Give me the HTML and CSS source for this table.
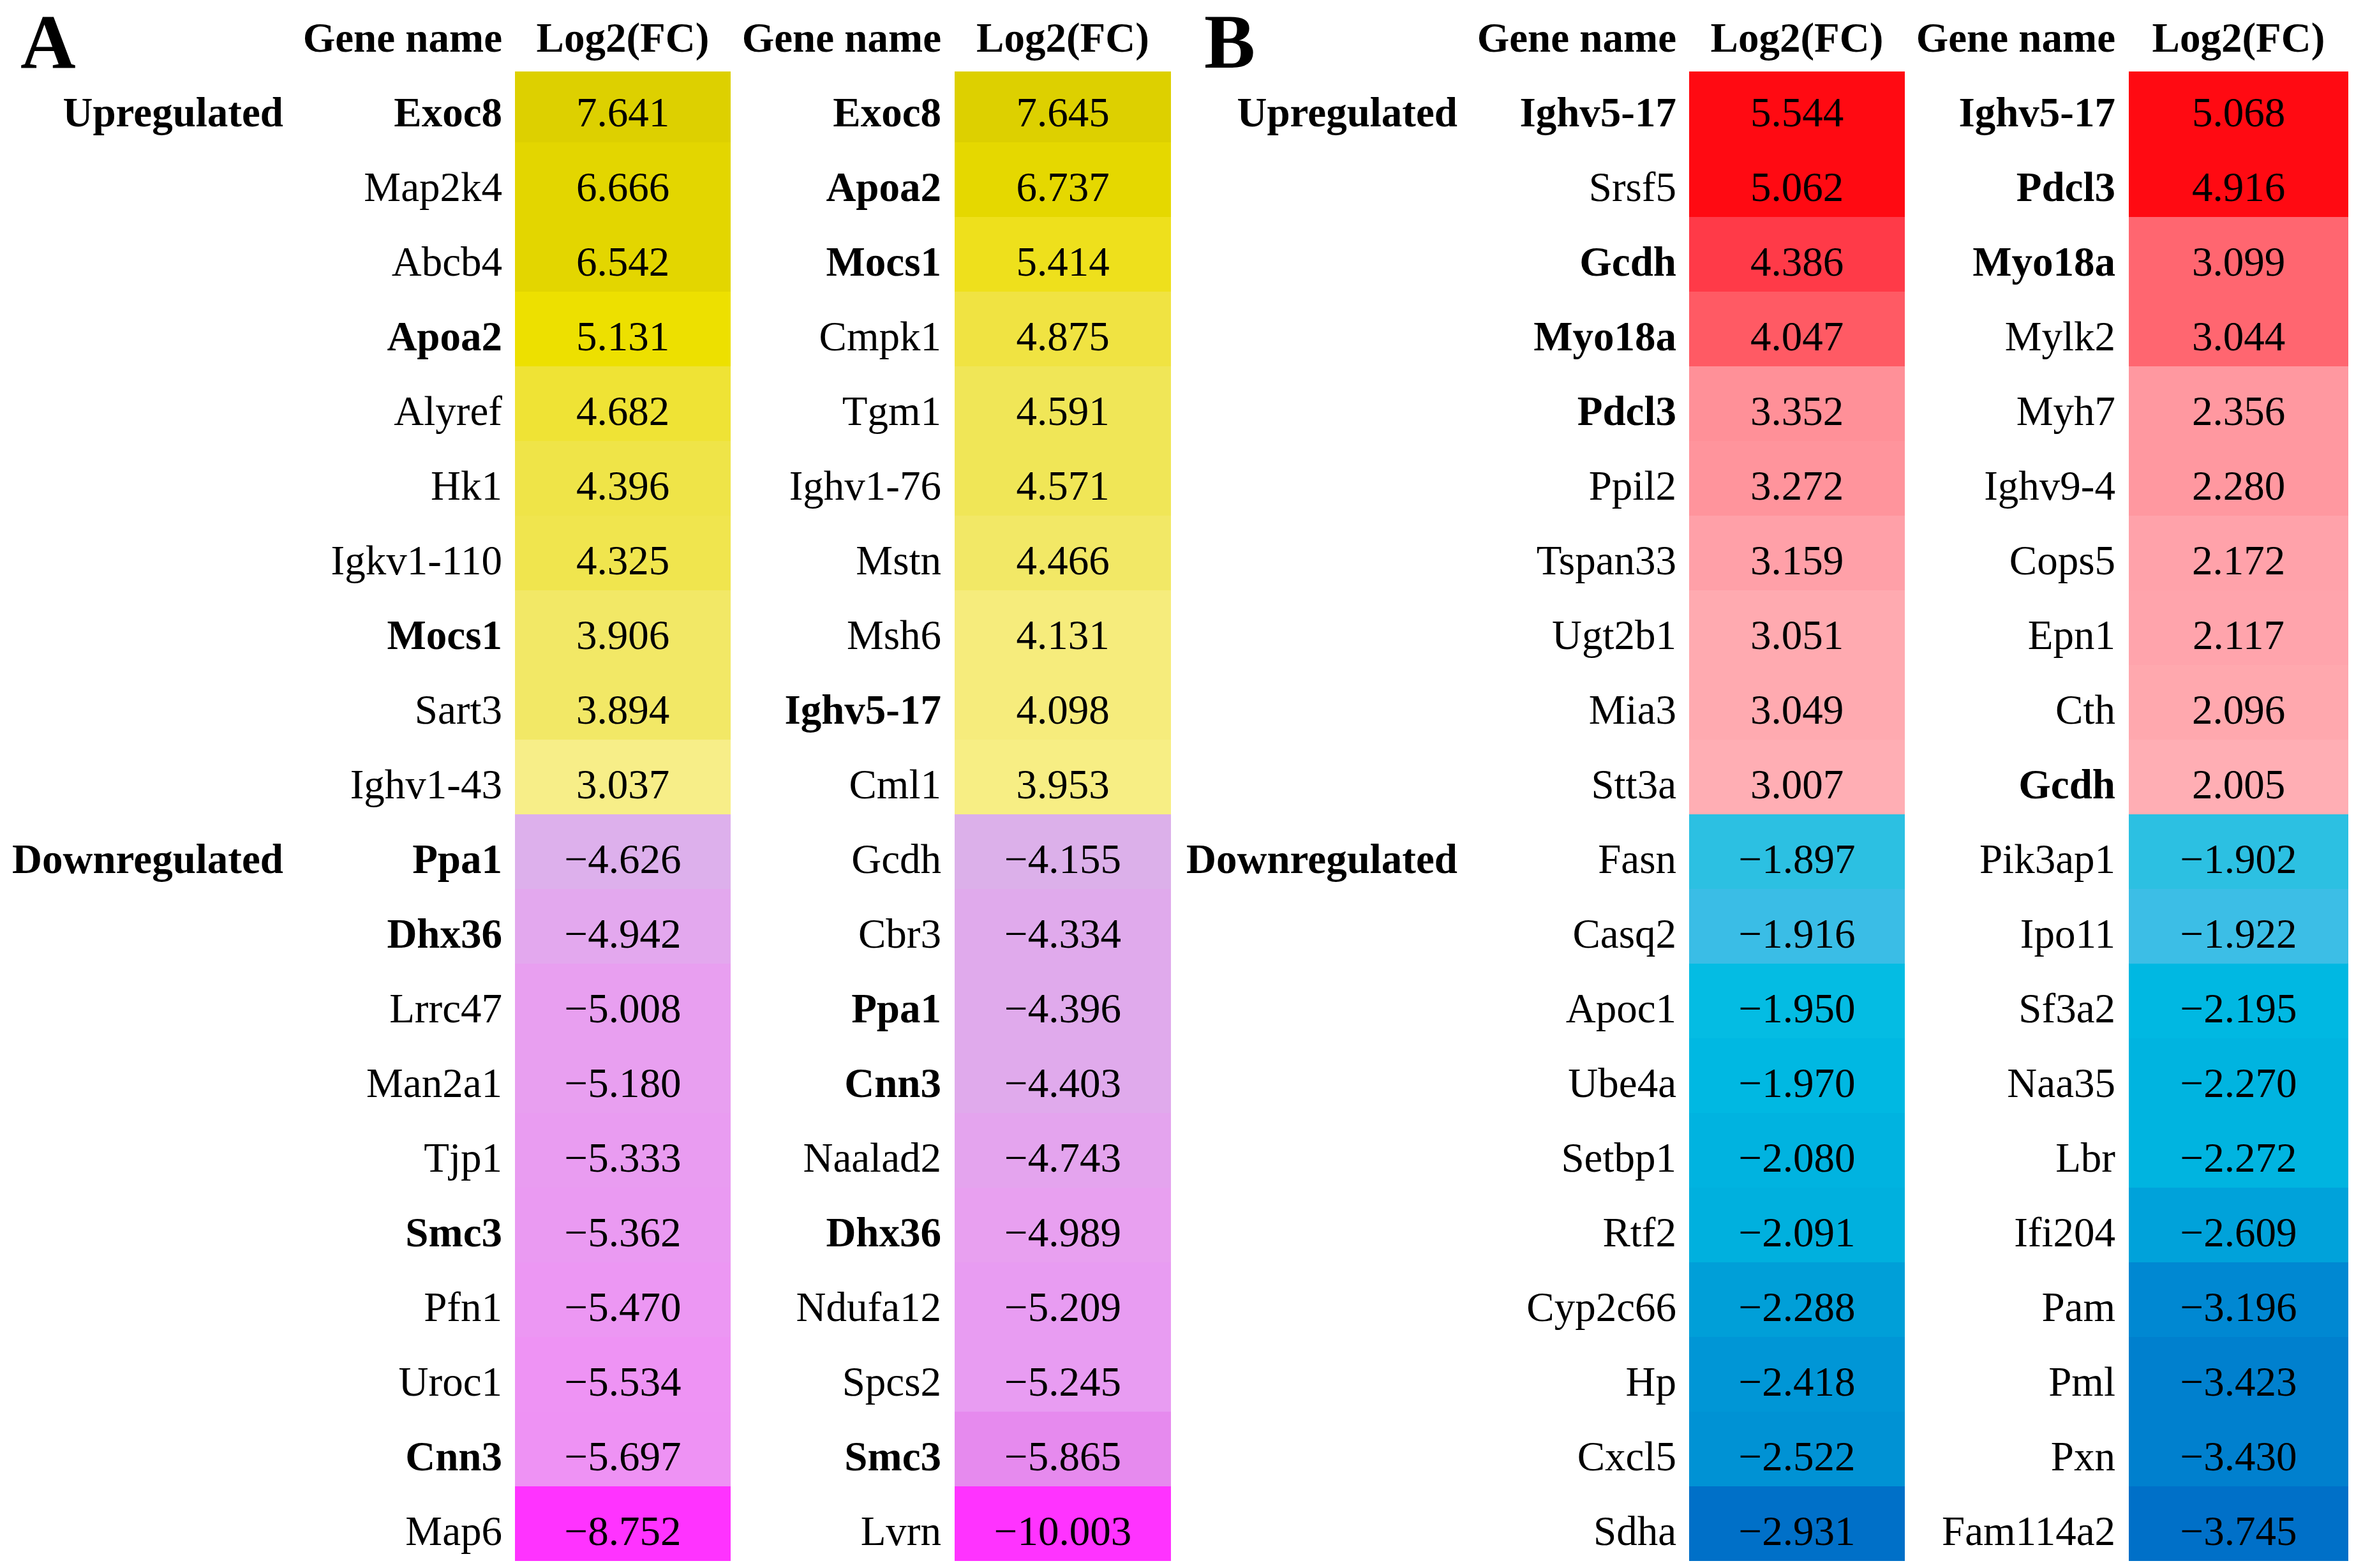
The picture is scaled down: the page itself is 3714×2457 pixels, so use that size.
FILE: index.html
```html
<!DOCTYPE html>
<html lang="en">
<head>
<meta charset="utf-8">
<title>Differentially expressed genes</title>
<link rel="stylesheet" href="styles.css">
</head>
<body>
<div class="figure">
  <section class="panel panel-a">
    <div class="cell letter letter-a">A</div>
    <div class="cell hdr-gene">Gene name</div>
    <div class="cell hdr-val">Log2(FC)</div>
    <div class="cell hdr-gene gene-2">Gene name</div>
    <div class="cell hdr-val">Log2(FC)</div>

    <div class="cell label">Upregulated</div>
    <div class="cell gene b">Exoc8</div><div class="cell val" style="background:#DDD000">7.641</div>
    <div class="cell gene gene-2 b">Exoc8</div><div class="cell val" style="background:#DDD000">7.645</div>

    <div class="cell label"></div>
    <div class="cell gene">Map2k4</div><div class="cell val" style="background:#E3D600">6.666</div>
    <div class="cell gene gene-2 b">Apoa2</div><div class="cell val" style="background:#E5D800">6.737</div>

    <div class="cell label"></div>
    <div class="cell gene">Abcb4</div><div class="cell val" style="background:#E3D600">6.542</div>
    <div class="cell gene gene-2 b">Mocs1</div><div class="cell val" style="background:#EEE01C">5.414</div>

    <div class="cell label"></div>
    <div class="cell gene b">Apoa2</div><div class="cell val" style="background:#EDE000">5.131</div>
    <div class="cell gene gene-2">Cmpk1</div><div class="cell val" style="background:#F0E342">4.875</div>

    <div class="cell label"></div>
    <div class="cell gene">Alyref</div><div class="cell val" style="background:#EFE335">4.682</div>
    <div class="cell gene gene-2">Tgm1</div><div class="cell val" style="background:#F0E657">4.591</div>

    <div class="cell label"></div>
    <div class="cell gene">Hk1</div><div class="cell val" style="background:#EFE448">4.396</div>
    <div class="cell gene gene-2">Ighv1-76</div><div class="cell val" style="background:#F0E657">4.571</div>

    <div class="cell label"></div>
    <div class="cell gene">Igkv1-110</div><div class="cell val" style="background:#F0E54E">4.325</div>
    <div class="cell gene gene-2">Mstn</div><div class="cell val" style="background:#F2E866">4.466</div>

    <div class="cell label"></div>
    <div class="cell gene b">Mocs1</div><div class="cell val" style="background:#F2E866">3.906</div>
    <div class="cell gene gene-2">Msh6</div><div class="cell val" style="background:#F6EC7C">4.131</div>

    <div class="cell label"></div>
    <div class="cell gene">Sart3</div><div class="cell val" style="background:#F2E866">3.894</div>
    <div class="cell gene gene-2 b">Ighv5-17</div><div class="cell val" style="background:#F6EC7C">4.098</div>

    <div class="cell label"></div>
    <div class="cell gene">Ighv1-43</div><div class="cell val" style="background:#F7EE88">3.037</div>
    <div class="cell gene gene-2">Cml1</div><div class="cell val" style="background:#F7EE84">3.953</div>

    <div class="cell label">Downregulated</div>
    <div class="cell gene b">Ppa1</div><div class="cell val" style="background:#DDB0EC">&minus;4.626</div>
    <div class="cell gene gene-2">Gcdh</div><div class="cell val" style="background:#DCB0EA">&minus;4.155</div>

    <div class="cell label"></div>
    <div class="cell gene b">Dhx36</div><div class="cell val" style="background:#E3A8EE">&minus;4.942</div>
    <div class="cell gene gene-2">Cbr3</div><div class="cell val" style="background:#E0AAEC">&minus;4.334</div>

    <div class="cell label"></div>
    <div class="cell gene">Lrrc47</div><div class="cell val" style="background:#E89FF0">&minus;5.008</div>
    <div class="cell gene gene-2 b">Ppa1</div><div class="cell val" style="background:#E0AAEC">&minus;4.396</div>

    <div class="cell label"></div>
    <div class="cell gene">Man2a1</div><div class="cell val" style="background:#E89FF0">&minus;5.180</div>
    <div class="cell gene gene-2 b">Cnn3</div><div class="cell val" style="background:#E0AAEC">&minus;4.403</div>

    <div class="cell label"></div>
    <div class="cell gene">Tjp1</div><div class="cell val" style="background:#E99CF1">&minus;5.333</div>
    <div class="cell gene gene-2">Naalad2</div><div class="cell val" style="background:#E4A4EE">&minus;4.743</div>

    <div class="cell label"></div>
    <div class="cell gene b">Smc3</div><div class="cell val" style="background:#EA9AF2">&minus;5.362</div>
    <div class="cell gene gene-2 b">Dhx36</div><div class="cell val" style="background:#E8A0F0">&minus;4.989</div>

    <div class="cell label"></div>
    <div class="cell gene">Pfn1</div><div class="cell val" style="background:#EC97F3">&minus;5.470</div>
    <div class="cell gene gene-2">Ndufa12</div><div class="cell val" style="background:#E89CF2">&minus;5.209</div>

    <div class="cell label"></div>
    <div class="cell gene">Uroc1</div><div class="cell val" style="background:#EE93F4">&minus;5.534</div>
    <div class="cell gene gene-2">Spcs2</div><div class="cell val" style="background:#E89CF2">&minus;5.245</div>

    <div class="cell label"></div>
    <div class="cell gene b">Cnn3</div><div class="cell val" style="background:#EE92F4">&minus;5.697</div>
    <div class="cell gene gene-2 b">Smc3</div><div class="cell val" style="background:#E68AEE">&minus;5.865</div>

    <div class="cell label"></div>
    <div class="cell gene">Map6</div><div class="cell val" style="background:#FF33FF">&minus;8.752</div>
    <div class="cell gene gene-2">Lvrn</div><div class="cell val" style="background:#FF33FF">&minus;10.003</div>
  </section>

  <section class="panel panel-b">
    <div class="cell letter letter-b">B</div>
    <div class="cell hdr-gene">Gene name</div>
    <div class="cell hdr-val">Log2(FC)</div>
    <div class="cell hdr-gene gene-2">Gene name</div>
    <div class="cell hdr-val">Log2(FC)</div>

    <div class="cell label">Upregulated</div>
    <div class="cell gene b">Ighv5-17</div><div class="cell val" style="background:#FF0A12">5.544</div>
    <div class="cell gene gene-2 b">Ighv5-17</div><div class="cell val" style="background:#FF0A12">5.068</div>

    <div class="cell label"></div>
    <div class="cell gene">Srsf5</div><div class="cell val" style="background:#FF0A12">5.062</div>
    <div class="cell gene gene-2 b">Pdcl3</div><div class="cell val" style="background:#FF0A12">4.916</div>

    <div class="cell label"></div>
    <div class="cell gene b">Gcdh</div><div class="cell val" style="background:#FF3A48">4.386</div>
    <div class="cell gene gene-2 b">Myo18a</div><div class="cell val" style="background:#FF6670">3.099</div>

    <div class="cell label"></div>
    <div class="cell gene b">Myo18a</div><div class="cell val" style="background:#FF5A64">4.047</div>
    <div class="cell gene gene-2">Mylk2</div><div class="cell val" style="background:#FF6670">3.044</div>

    <div class="cell label"></div>
    <div class="cell gene b">Pdcl3</div><div class="cell val" style="background:#FF9098">3.352</div>
    <div class="cell gene gene-2">Myh7</div><div class="cell val" style="background:#FF98A0">2.356</div>

    <div class="cell label"></div>
    <div class="cell gene">Ppil2</div><div class="cell val" style="background:#FF949C">3.272</div>
    <div class="cell gene gene-2">Ighv9-4</div><div class="cell val" style="background:#FF98A0">2.280</div>

    <div class="cell label"></div>
    <div class="cell gene">Tspan33</div><div class="cell val" style="background:#FFA0A8">3.159</div>
    <div class="cell gene gene-2">Cops5</div><div class="cell val" style="background:#FFA2AA">2.172</div>

    <div class="cell label"></div>
    <div class="cell gene">Ugt2b1</div><div class="cell val" style="background:#FFAAB0">3.051</div>
    <div class="cell gene gene-2">Epn1</div><div class="cell val" style="background:#FFA4AC">2.117</div>

    <div class="cell label"></div>
    <div class="cell gene">Mia3</div><div class="cell val" style="background:#FFAAB0">3.049</div>
    <div class="cell gene gene-2">Cth</div><div class="cell val" style="background:#FFA8AE">2.096</div>

    <div class="cell label"></div>
    <div class="cell gene">Stt3a</div><div class="cell val" style="background:#FFAEB4">3.007</div>
    <div class="cell gene gene-2 b">Gcdh</div><div class="cell val" style="background:#FFAEB4">2.005</div>

    <div class="cell label">Downregulated</div>
    <div class="cell gene">Fasn</div><div class="cell val" style="background:#2CC0E2">&minus;1.897</div>
    <div class="cell gene gene-2">Pik3ap1</div><div class="cell val" style="background:#2CC0E2">&minus;1.902</div>

    <div class="cell label"></div>
    <div class="cell gene">Casq2</div><div class="cell val" style="background:#3ABDE6">&minus;1.916</div>
    <div class="cell gene gene-2">Ipo11</div><div class="cell val" style="background:#3CBEE6">&minus;1.922</div>

    <div class="cell label"></div>
    <div class="cell gene">Apoc1</div><div class="cell val" style="background:#04BCE3">&minus;1.950</div>
    <div class="cell gene gene-2">Sf3a2</div><div class="cell val" style="background:#00B8E2">&minus;2.195</div>

    <div class="cell label"></div>
    <div class="cell gene">Ube4a</div><div class="cell val" style="background:#00B8E2">&minus;1.970</div>
    <div class="cell gene gene-2">Naa35</div><div class="cell val" style="background:#00B4E0">&minus;2.270</div>

    <div class="cell label"></div>
    <div class="cell gene">Setbp1</div><div class="cell val" style="background:#00B3E0">&minus;2.080</div>
    <div class="cell gene gene-2">Lbr</div><div class="cell val" style="background:#00B4E0">&minus;2.272</div>

    <div class="cell label"></div>
    <div class="cell gene">Rtf2</div><div class="cell val" style="background:#00B0DE">&minus;2.091</div>
    <div class="cell gene gene-2">Ifi204</div><div class="cell val" style="background:#00A2DA">&minus;2.609</div>

    <div class="cell label"></div>
    <div class="cell gene">Cyp2c66</div><div class="cell val" style="background:#009FD8">&minus;2.288</div>
    <div class="cell gene gene-2">Pam</div><div class="cell val" style="background:#0088D2">&minus;3.196</div>

    <div class="cell label"></div>
    <div class="cell gene">Hp</div><div class="cell val" style="background:#0096D6">&minus;2.418</div>
    <div class="cell gene gene-2">Pml</div><div class="cell val" style="background:#0080CE">&minus;3.423</div>

    <div class="cell label"></div>
    <div class="cell gene">Cxcl5</div><div class="cell val" style="background:#0092D4">&minus;2.522</div>
    <div class="cell gene gene-2">Pxn</div><div class="cell val" style="background:#0080CE">&minus;3.430</div>

    <div class="cell label"></div>
    <div class="cell gene">Sdha</div><div class="cell val" style="background:#0070C8">&minus;2.931</div>
    <div class="cell gene gene-2">Fam114a2</div><div class="cell val" style="background:#0070C8">&minus;3.745</div>
  </section>
</div>
</body>
</html>
```

FILE: styles.css
```css
html, body {
  margin: 0;
  padding: 0;
  background: #ffffff;
}

body {
  font-family: "Liberation Serif", "Times New Roman", serif;
  color: #000000;
}

.figure {
  display: flex;
  gap: 5px;
  align-items: flex-start;
}

.panel {
  display: grid;
  grid-template-rows: 112px 111px repeat(19, 117px);
}

.panel-a {
  grid-template-columns: 444px 363px 338px 351px 339px;
}

.panel-b {
  grid-template-columns: 444px 363px 338px 351px 344px;
}

.cell {
  display: flex;
  align-items: flex-end;
  font-size: 65px;
  line-height: 65px;
  padding-bottom: 14px;
  white-space: nowrap;
  min-width: 0;
}

.letter {
  font-size: 120px;
  line-height: 80px;
  font-weight: bold;
  padding-bottom: 6px;
}

.letter-a {
  padding-left: 32px;
}

.letter-b {
  padding-left: 47px;
}

.hdr-gene,
.hdr-val {
  font-weight: bold;
  padding-bottom: 20px;
}

.hdr-gene {
  justify-content: flex-end;
  padding-right: 20px;
}

.hdr-val {
  justify-content: center;
}

.label {
  font-weight: bold;
  justify-content: flex-end;
}

.gene {
  justify-content: flex-end;
  padding-right: 20px;
}

.gene-2 {
  padding-right: 21px;
}

.b {
  font-weight: bold;
}

.val {
  justify-content: center;
}
```
